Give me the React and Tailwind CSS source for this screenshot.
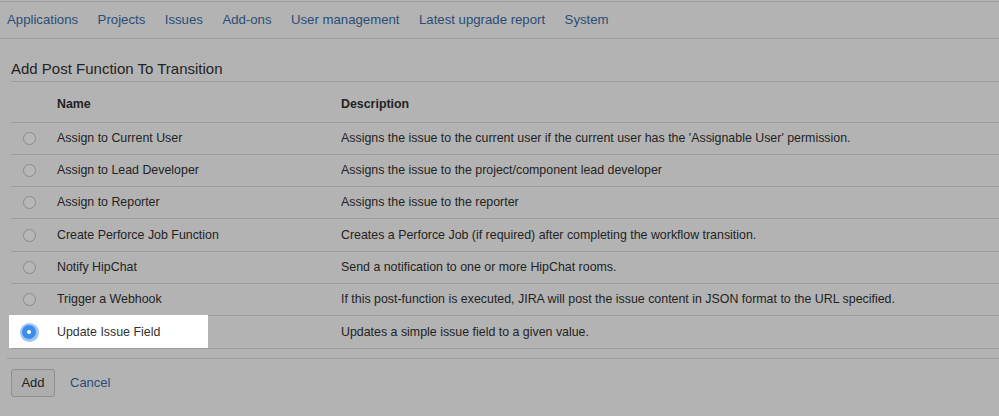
import React from 'react';

const navItems = [
  'Applications',
  'Projects',
  'Issues',
  'Add-ons',
  'User management',
  'Latest upgrade report',
  'System'
];

// heights alternate a little so the row lines land where the screenshot has them
const functions = [
  { name: 'Assign to Current User', desc: "Assigns the issue to the current user if the current user has the 'Assignable User' permission.", h: 'h-[32px]' },
  { name: 'Assign to Lead Developer', desc: 'Assigns the issue to the project/component lead developer', h: 'h-[32px]' },
  { name: 'Assign to Reporter', desc: 'Assigns the issue to the reporter', h: 'h-[32px]' },
  { name: 'Create Perforce Job Function', desc: 'Creates a Perforce Job (if required) after completing the workflow transition.', h: 'h-[33px]' },
  { name: 'Notify HipChat', desc: 'Send a notification to one or more HipChat rooms.', h: 'h-[32px]' },
  { name: 'Trigger a Webhook', desc: 'If this post-function is executed, JIRA will post the issue content in JSON format to the URL specified.', h: 'h-[32px]' },
  { name: 'Update Issue Field', desc: 'Updates a simple issue field to a given value.', h: 'h-[33px]', selected: true }
];

const Radio = ({ checked }) => {
  if (checked) {
    return (
      <span className="flex items-center justify-center w-[19px] h-[19px] rounded-full bg-[#9cc6f7]">
        <span className="flex items-center justify-center w-[14px] h-[14px] rounded-full bg-[#3c8ce9]">
          <span className="w-[4px] h-[4px] rounded-full bg-white" />
        </span>
      </span>
    );
  }
  return <span className="block w-[13px] h-[13px] rounded-full border border-[#8a8a8a] bg-[#b7b7b7]" />;
};

const App = () => {
  return (
    <div className="w-[999px] h-[416px] overflow-hidden bg-[#b3b3b3] text-[#232323] font-['Liberation_Sans',Arial,sans-serif]">
      {/* admin nav */}
      <nav className="mt-[1px] h-[38px] border-y border-[#9c9c9c] flex items-center gap-[19.5px] pl-[7px] text-[13.2px] text-[#2a4d76]">
        {navItems.map((item) => (
          <span key={item} className="whitespace-nowrap">{item}</span>
        ))}
      </nav>

      <div className="pl-[11px]">
        <h2 className="mt-[20px] pb-[2px] leading-[20px] text-[15px] border-b border-[#9c9c9c]">
          Add Post Function To Transition
        </h2>

        {/* table header */}
        <div className="flex h-[41px] pt-[15px] leading-[15px] text-[12.4px] font-bold border-b border-[#9c9c9c]">
          <div className="w-[46px]" />
          <div className="w-[284px]">Name</div>
          <div>Description</div>
        </div>

        {functions.map((fn) => (
          <div key={fn.name} className={`relative flex items-center text-[12.4px] border-b border-[#9c9c9c] ${fn.h}`}>
            {fn.selected && (
              <div className="absolute left-[-2px] top-[-1px] w-[199px] h-[33px] bg-white" />
            )}
            <div className={`relative w-[46px] flex ${fn.selected ? 'pl-[8.5px]' : 'pl-[11.5px]'}`}>
              <Radio checked={fn.selected} />
            </div>
            <div className={`relative w-[284px] whitespace-nowrap ${fn.selected ? 'text-[#333]' : ''}`}>{fn.name}</div>
            <div className="whitespace-nowrap">{fn.desc}</div>
          </div>
        ))}
      </div>

      {/* buttons */}
      <div className="ml-[7px] mt-[9px] border-t border-[#9c9c9c] pl-[4px] pt-[10px] flex items-center gap-[15px]">
        <button className="w-[44px] h-[28px] rounded-[3px] border border-[#8e8e8e] bg-[#adadad] text-[13px] text-[#222]">
          Add
        </button>
        <span className="text-[13px] text-[#2a4d76]">Cancel</span>
      </div>
    </div>
  );
};

export default App;
